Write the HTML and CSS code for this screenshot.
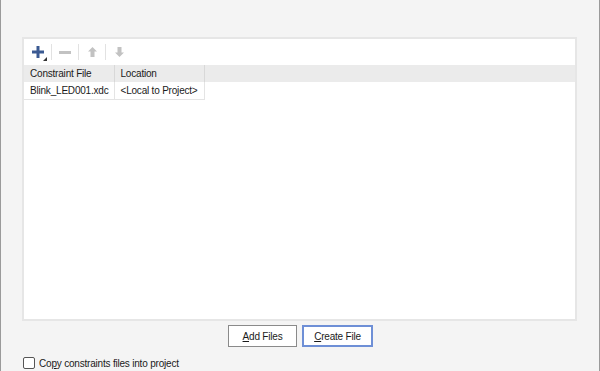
FILE: index.html
```html
<!DOCTYPE html>
<html lang="en">
<head>
  <meta charset="UTF-8" />
  <title>Constraints</title>
  <link rel="stylesheet" href="styles.css">
</head>
<body>
  <div class="page">
    <div class="panel">
      <div class="toolbar">
        <span class="tool add">
          <svg width="12" height="12" viewBox="0 0 12 12">
            <path d="M4.5 0h3v4.5H12v3H7.5V12h-3V7.5H0v-3h4.5z" fill="#3b5a92"/>
          </svg>
          <svg class="corner" width="4" height="4" viewBox="0 0 4 4"><path d="M4 0v4H0z" fill="#333"/></svg>
        </span>
        <span class="sep"></span>
        <span class="tool">
          <svg width="12" height="3" viewBox="0 0 12 3"><rect width="12" height="3" fill="#c2c2c2"/></svg>
        </span>
        <span class="sep"></span>
        <span class="tool">
          <svg width="9" height="10" viewBox="0 0 9 10"><path d="M4.5 0L9 4.5H6.5V10h-4V4.5H0z" fill="#c2c2c2"/></svg>
        </span>
        <span class="sep"></span>
        <span class="tool">
          <svg width="9" height="10" viewBox="0 0 9 10"><path d="M4.5 10L9 5.5H6.5V0h-4v5.5H0z" fill="#c2c2c2"/></svg>
        </span>
      </div>
      <table class="grid">
        <colgroup>
          <col class="c1"><col class="c2"><col>
        </colgroup>
        <thead>
          <tr><th>Constraint File</th><th>Location</th><th class="rest"></th></tr>
        </thead>
        <tbody>
          <tr><td>Blink_LED001.xdc</td><td>&lt;Local to Project&gt;</td><td class="rest empty"></td></tr>
        </tbody>
      </table>
    </div>
    <div class="actions">
      <button class="btn"><u>A</u>dd Files</button>
      <button class="btn primary"><u>C</u>reate File</button>
    </div>
    <label class="check">
      <span class="box"></span>
      <span>Co<u>p</u>y constraints files into project</span>
    </label>
  </div>
</body>
</html>
```

FILE: styles.css
```css
html, body {
  margin: 0;
  height: 100%;
}

body {
  font-family: "Liberation Sans", Arial, sans-serif;
  font-size: 10px;
  letter-spacing: -0.2px;
  color: #1a1a1a;
  background: #f4f4f4;
  overflow: hidden;
}

.page {
  box-sizing: border-box;
  height: 371px;
  border-left: 1px solid #9a9a9a;
  border-right: 1px solid #9a9a9a;
  padding: 37px 22px 0 21px;
}

.panel {
  box-sizing: border-box;
  height: 284px;
  background: #fff;
  border: 2px solid #e6e6e6;
}

.toolbar {
  display: flex;
  align-items: center;
  height: 26px;
  padding-left: 1px;
}

.tool {
  position: relative;
  display: flex;
  align-items: center;
  justify-content: center;
  width: 26px;
  height: 20px;
}

.corner {
  position: absolute;
  left: 18px;
  bottom: 1px;
}

.sep {
  width: 1px;
  height: 16px;
  background: #e2e2e2;
}

.grid {
  border-collapse: collapse;
  table-layout: fixed;
  width: 100%;
}

.grid col.c1 {
  width: 90px;
}

.grid col.c2 {
  width: 90px;
}

.grid th,
.grid td {
  white-space: nowrap;
  overflow: hidden;
  text-align: left;
  height: 17px;
  padding: 0 6px;
}

.grid th {
  background: #ebebeb;
  font-weight: normal;
  border-right: 1px solid #d8d8d8;
}

.grid td {
  border-right: 1px solid #e4e4e4;
  border-bottom: 1px solid #e4e4e4;
}

.grid .rest {
  border-right: none;
}

.grid td.empty {
  border-bottom: none;
}

.actions {
  display: flex;
  justify-content: center;
  gap: 5px;
  margin-top: 4px;
  padding-left: 2px;
}

.btn {
  font-family: "Liberation Sans", Arial, sans-serif;
  font-size: 10px;
  letter-spacing: -0.2px;
  color: #1a1a1a;
  background: #fff;
  border: 1px solid #8a8a8a;
  width: 69px;
  height: 22px;
  padding: 0;
}

.btn.primary {
  width: 71px;
  border: 2px solid #6e8fd6;
}

.check {
  display: flex;
  align-items: center;
  gap: 4px;
  margin-top: 10px;
  margin-left: 1px;
}

.check .box {
  box-sizing: border-box;
  width: 12px;
  height: 12px;
  border: 1px solid #555;
  border-radius: 2px;
  background: #fff;
}
```
